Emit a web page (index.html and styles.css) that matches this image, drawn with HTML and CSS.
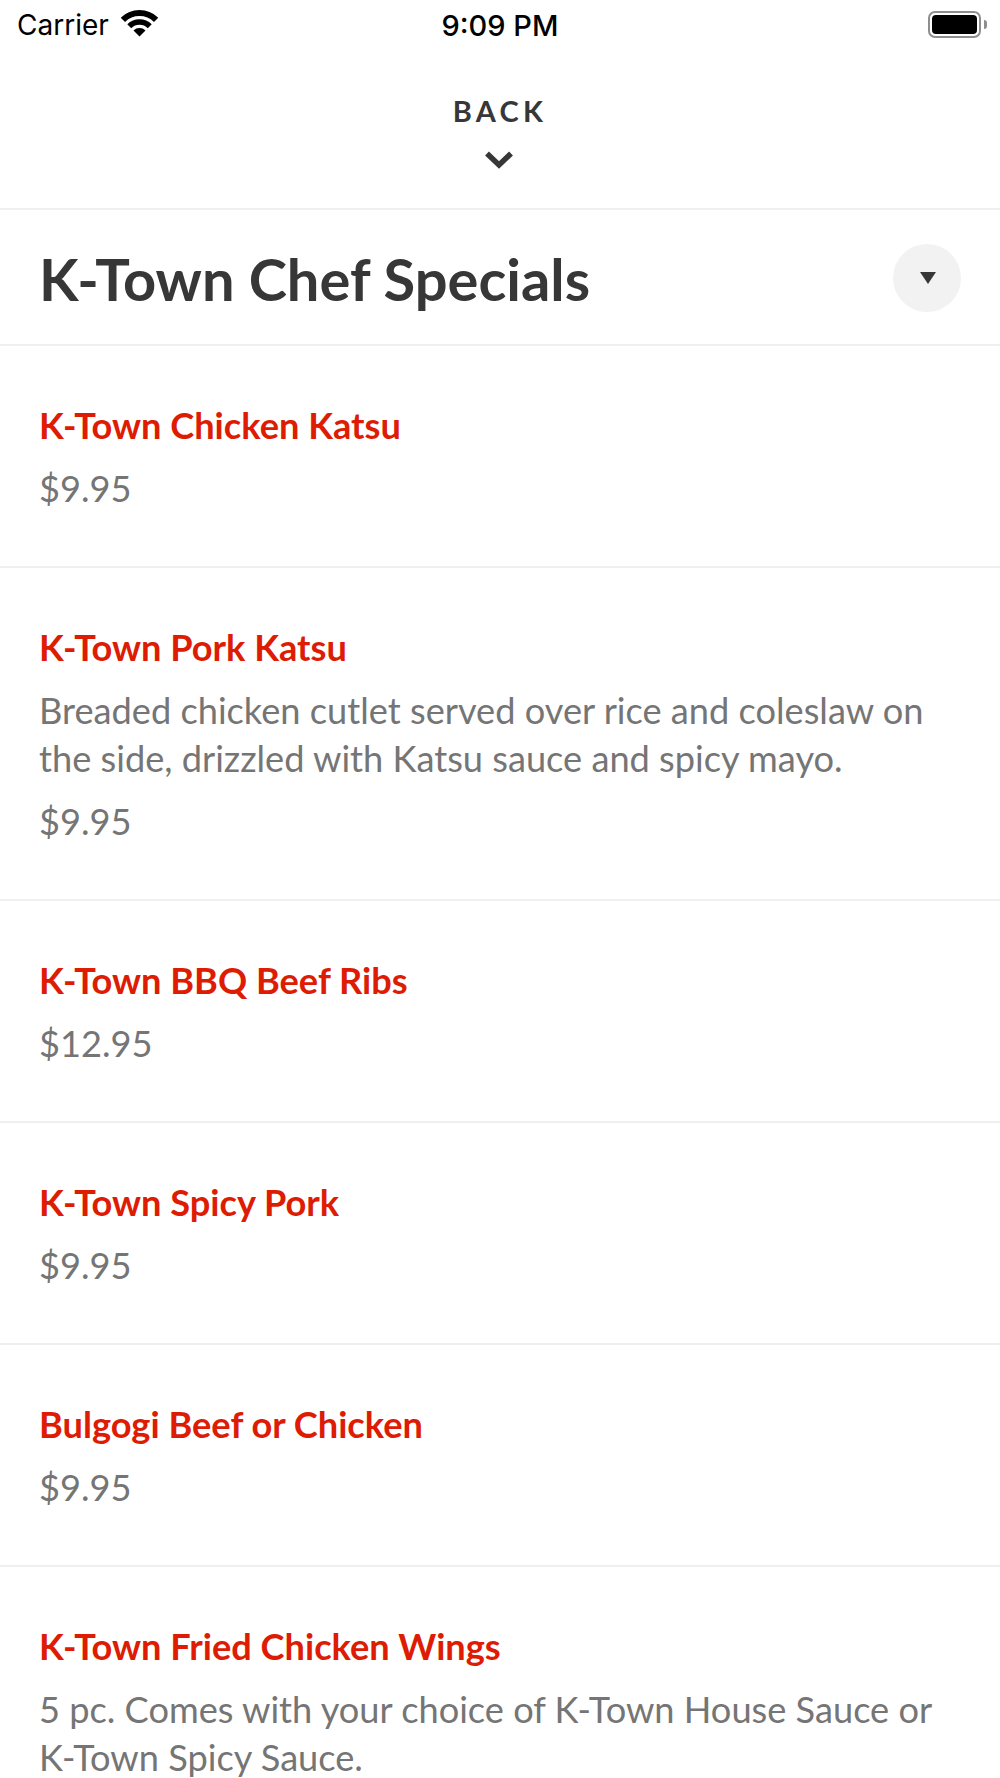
FILE: index.html
```html
<!DOCTYPE html>
<html lang="en">
<head>
<meta charset="utf-8">
<title>K-Town Chef Specials</title>
<link rel="stylesheet" href="styles.css">
</head>
<body>
<div class="page">
  <div class="status">
    <div class="status-left">
      <span class="carrier">Carrier</span>
      <svg class="wifi" viewBox="0 0 37 27" width="37" height="27"><path d="M1.900 9.900A23.500 23.500 0 0 1 35.100 9.900" fill="none" stroke="#000" stroke-width="6"/><path d="M8.250 16.250A14.500 14.500 0 0 1 28.750 16.250" fill="none" stroke="#000" stroke-width="5.500"/><path d="M18.500 26.500L12.500 20.500A8.500 8.500 0 0 1 24.500 20.500Z"/></svg>
    </div>
    <span class="time">9:09 PM</span>
    <div class="battery"><span class="battery-body"><span class="battery-fill"></span></span><span class="battery-cap"></span></div>
  </div>
  <div class="back">
    <span class="back-label">BACK</span>
    <svg class="chevron" viewBox="0 0 30 20" width="30" height="20"><path d="M3 3.500L15 15L27 3.500" fill="none" stroke="#373737" stroke-width="5.500"/></svg>
  </div>
  <div class="section">
    <h1 class="section-title">K-Town Chef Specials</h1>
    <div class="toggle"><svg class="caret" viewBox="0 0 16 12" width="16" height="12"><path d="M0 0H16L8 12Z" fill="#373737"/></svg></div>
  </div>
  <div class="item">
    <div class="name">K-Town Chicken Katsu</div>
    <div class="price">$9.95</div>
  </div>
  <div class="item">
    <div class="name">K-Town Pork Katsu</div>
    <div class="desc">Breaded chicken cutlet served over rice and coleslaw on the side, drizzled with Katsu sauce and spicy mayo.</div>
    <div class="price">$9.95</div>
  </div>
  <div class="item">
    <div class="name">K-Town BBQ Beef Ribs</div>
    <div class="price">$12.95</div>
  </div>
  <div class="item">
    <div class="name">K-Town Spicy Pork</div>
    <div class="price">$9.95</div>
  </div>
  <div class="item">
    <div class="name">Bulgogi Beef or Chicken</div>
    <div class="price">$9.95</div>
  </div>
  <div class="item">
    <div class="name">K-Town Fried Chicken Wings</div>
    <div class="desc">5 pc. Comes with your choice of K-Town House Sauce or K-Town Spicy Sauce.</div>
  </div>
</div>
</body>
</html>
```
FILE: styles.css
```css
* { box-sizing: border-box; }
html, body { margin: 0; padding: 0; background: #fff; }
body { font-family: Lato, sans-serif; }
.page { width: 1000px; height: 1778px; overflow: hidden; background: #fff; }
.status { height: 50px; position: relative; display: flex; align-items: center; justify-content: space-between; padding: 0 13px 0 17px; font-family: Inter, "Liberation Sans", sans-serif; color: #000; }
.status-left { display: flex; align-items: center; gap: 12px; }
.carrier { font-size: 28px; }
.wifi { display: block; margin-top: -3px; }
.time { position: absolute; left: 0; right: 0; text-align: center; font-size: 29px; font-weight: 500; }
.battery { display: flex; align-items: center; gap: 3px; margin-top: -2px; }
.battery-body { width: 53px; height: 27px; border: 2px solid #8e8e8e; border-radius: 7px; padding: 2px; display: block; }
.battery-fill { display: block; height: 100%; background: #000; border-radius: 4px; }
.battery-cap { width: 3px; height: 9px; background: #8e8e8e; border-radius: 0 3px 3px 0; }
.back { height: 160px; border-bottom: 2px solid #efefef; display: flex; flex-direction: column; align-items: center; }
.back-label { font-size: 29px; font-weight: 700; letter-spacing: 4.300px; color: #373737; margin-top: 44px; line-height: 34px; }
.chevron { display: block; margin-top: 22px; margin-right: 3px; }
.section { height: 136px; border-bottom: 2px solid #efefef; display: flex; align-items: center; justify-content: space-between; padding: 0 39px 0 39px; }
.section-title { margin: 0; padding-top: 3px; font-size: 57.800px; font-weight: 700; color: #373737; }
.toggle { width: 68px; height: 68px; border-radius: 50%; background: #f2f2f2; display: flex; align-items: center; justify-content: center; margin-top: 2px; }
.caret { margin-left: 2px; margin-top: -1px; }
.item { padding: 56.800px 39px 55.500px; border-bottom: 2px solid #efefef; }
.name { font-size: 36.200px; font-weight: 700; color: #dd1c03; line-height: 44px; }
.desc { font-size: 36.200px; color: #757575; line-height: 48.500px; margin-top: 17px; }
.desc + .price { margin-top: 16.700px; }
.price { font-size: 36.200px; color: #757575; line-height: 44px; margin-top: 19.700px; }
```
